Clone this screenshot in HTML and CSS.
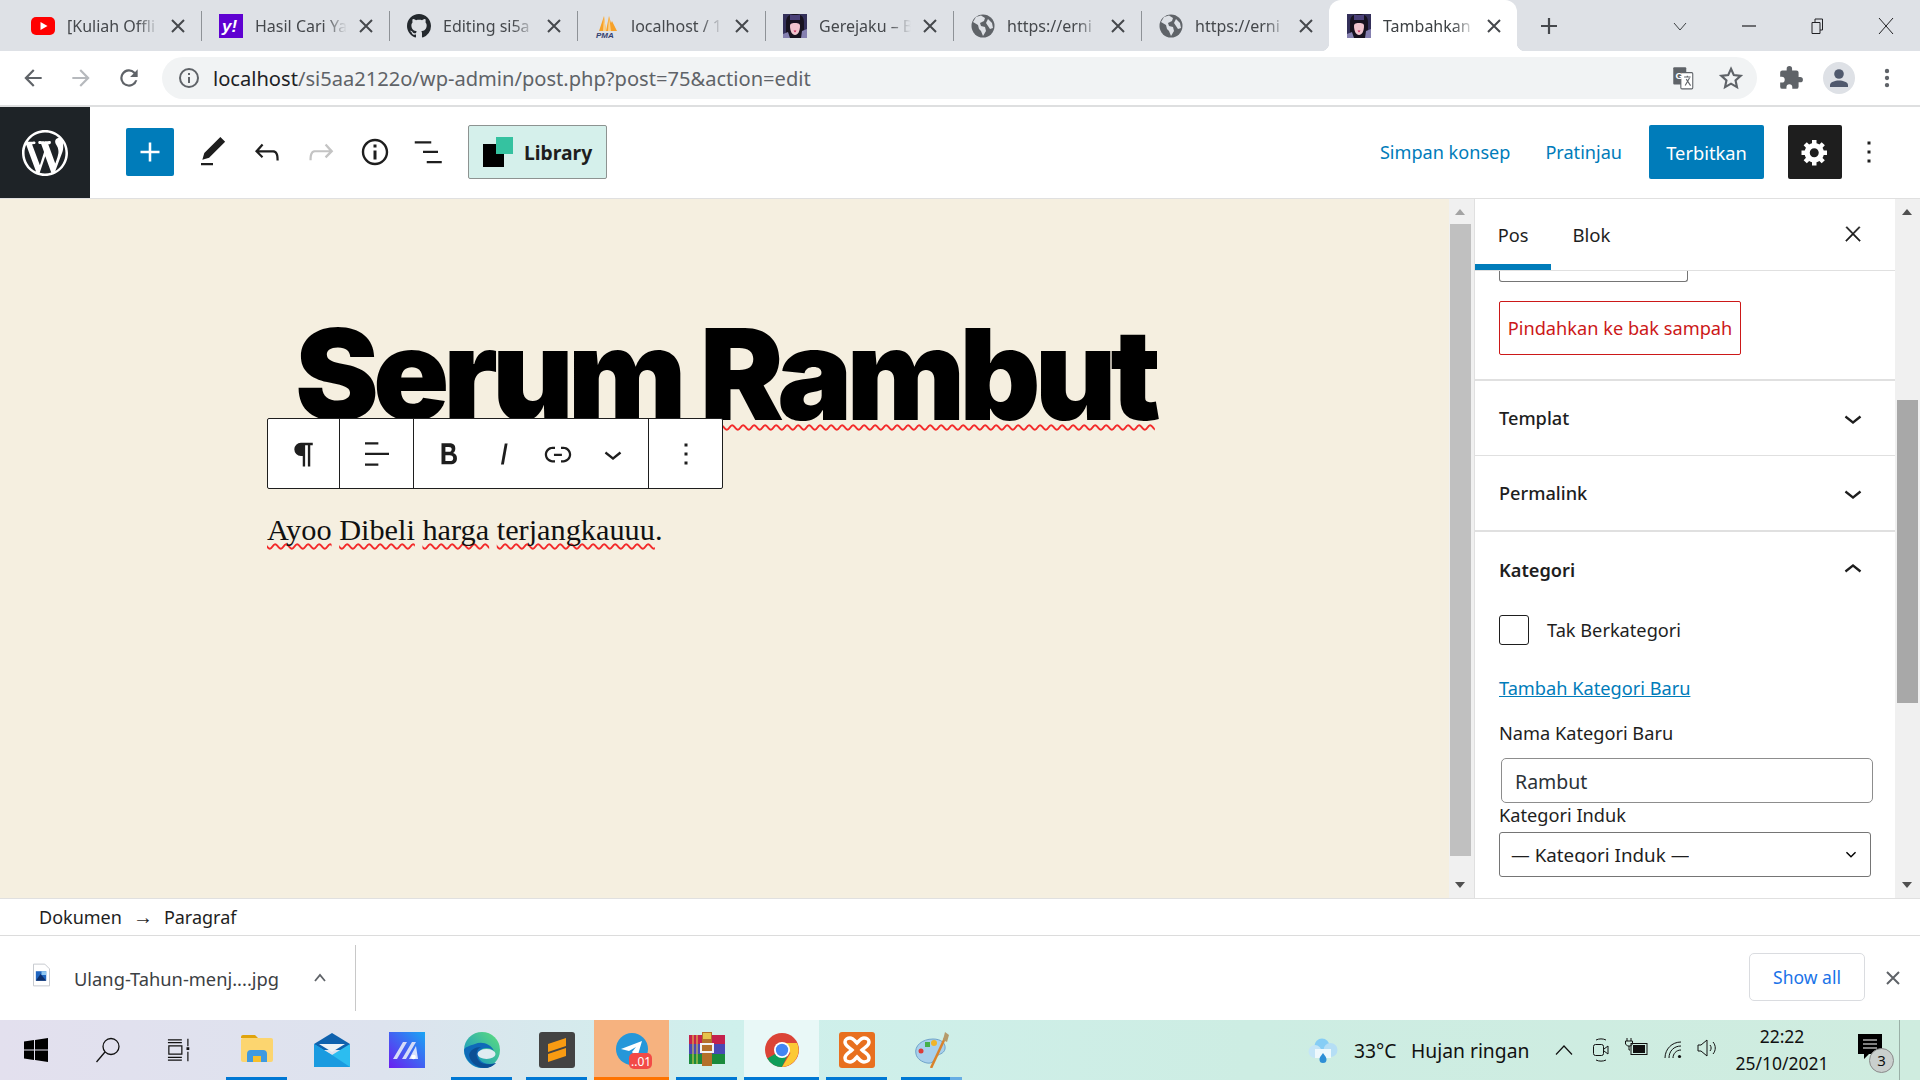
FILE: index.html
```html
<!DOCTYPE html>
<html lang="id">
  <head>
    <meta charset="UTF-8" />
    <meta name="viewport" content="width=device-width, initial-scale=1.0" />
    <title>Tambahkan Pos</title>
    <link rel="stylesheet" href="styles.css">
  </head>
  <body>
    <!-- Shared icons -->
    <svg class="defs" aria-hidden="true">
      <symbol id="i-x" viewBox="0 0 24 24"><path d="M13 11.8l6.1-6.3-1-1-6.1 6.2-6.1-6.2-1 1 6.1 6.3-6.5 6.7 1 1 6.5-6.6 6.5 6.6 1-1z"/></symbol>
      <symbol id="i-tabx" viewBox="0 0 18 18"><path d="M3 3l12 12M15 3L3 15" stroke="#45484c" stroke-width="2" fill="none"/></symbol>
      <symbol id="i-down" viewBox="0 0 24 24"><path d="M17.5 11.6L12 16l-5.5-4.4.9-1.2L12 14l4.5-3.6 1 1.2z"/></symbol>
      <symbol id="i-more" viewBox="0 0 24 24"><path d="M13 19h-2v-2h2v2zm0-6h-2v-2h2v2zm0-6h-2V5h2v2z"/></symbol>
      <symbol id="i-globe" viewBox="0 0 24 24"><circle cx="12" cy="12" r="11.5" fill="#5f6368"/><path d="M10 1.500l4 2.500-1 3-4 2 1 3 4 1 1 4-3 5-2-5-2-2-1-4-5-3 3-5zM17 5l4 4 1 5-3 1-2-3-2-3z" fill="#dee1e6"/></symbol>
      <symbol id="i-face" viewBox="0 0 24 24"><rect width="24" height="24" fill="#34305a"/><path d="M3 24V8c0-6 4-8 9-8s9 2 9 8v16z" fill="#17121f"/><path d="M7 12c0-2 1-3 5-3s5 1 5 3c0 5-2 9-5 9s-5-4-5-9z" fill="#f0c4cd"/><path d="M10.500 16.500h3l-1.500 2z" fill="#c8245a"/><rect x="7" y="1" width="10" height="5" fill="#4a4078"/><path d="M0 20l5-2 2 6H0zM24 15l-5 2-1 7h6z" fill="#8580b0"/></symbol>
    </svg>

    <!-- Browser tab strip -->
    <header class="tabstrip">
      <div class="tab">
        <svg class="favicon" viewBox="0 0 24 24"><rect y="3" width="24" height="18" rx="5" fill="#f00"/><path d="M9.500 8l7 4-7 4z" fill="#fff"/></svg>
        <span class="tab-title">[Kuliah Offli</span>
        <svg class="tab-close"><use href="#i-tabx"/></svg>
      </div>
      <div class="tab tab-sep">
        <svg class="favicon" viewBox="0 0 24 24"><rect width="24" height="24" fill="#5f01d1"/><text x="3" y="18" class="yahoo-mark">y!</text></svg>
        <span class="tab-title">Hasil Cari Ya</span>
        <svg class="tab-close"><use href="#i-tabx"/></svg>
      </div>
      <div class="tab tab-sep">
        <svg class="favicon" viewBox="0 0 16 16"><path fill="#24292e" d="M8 0C3.580 0 0 3.580 0 8c0 3.540 2.290 6.530 5.470 7.590.4.070.55-.17.55-.38 0-.19-.01-.82-.01-1.490-2.010.37-2.530-.49-2.690-.94-.09-.23-.48-.94-.82-1.130-.28-.15-.68-.52-.01-.53.63-.01 1.080.58 1.230.82.72 1.210 1.870.87 2.330.66.070-.52.28-.87.51-1.070-1.780-.2-3.640-.89-3.640-3.950 0-.87.31-1.590.82-2.150-.08-.2-.36-1.020.08-2.120 0 0 .67-.21 2.200.82.64-.18 1.320-.27 2-.27.68 0 1.360.09 2 .27 1.530-1.040 2.200-.82 2.200-.82.44 1.100.16 1.920.08 2.120.51.56.82 1.270.82 2.150 0 3.070-1.870 3.750-3.650 3.950.29.25.54.73.54 1.480 0 1.070-.01 1.930-.01 2.200 0 .21.15.46.55.38A8.013 8.013 0 0016 8c0-4.420-3.580-8-8-8z"/></svg>
        <span class="tab-title">Editing si5a</span>
        <svg class="tab-close"><use href="#i-tabx"/></svg>
      </div>
      <div class="tab tab-sep">
        <svg class="favicon" viewBox="0 0 24 24"><path d="M4 17L9 2l2 15zM11 17l3-15 2 7 1-2 5 10z" fill="#f7a128"/><path d="M9 2l2 15H8zM14 2l2 15h-3z" fill="#fbd08a"/><text x="1" y="23.500" class="pma-mark">PMA</text></svg>
        <span class="tab-title">localhost / 1</span>
        <svg class="tab-close"><use href="#i-tabx"/></svg>
      </div>
      <div class="tab tab-sep">
        <svg class="favicon"><use href="#i-face"/></svg>
        <span class="tab-title">Gerejaku – B</span>
        <svg class="tab-close"><use href="#i-tabx"/></svg>
      </div>
      <div class="tab tab-sep">
        <svg class="favicon"><use href="#i-globe"/></svg>
        <span class="tab-title">https://erni</span>
        <svg class="tab-close"><use href="#i-tabx"/></svg>
      </div>
      <div class="tab tab-sep">
        <svg class="favicon"><use href="#i-globe"/></svg>
        <span class="tab-title">https://erni</span>
        <svg class="tab-close"><use href="#i-tabx"/></svg>
      </div>
      <div class="tab tab-active">
        <svg class="favicon"><use href="#i-face"/></svg>
        <span class="tab-title">Tambahkan</span>
        <svg class="tab-close"><use href="#i-tabx"/></svg>
      </div>
      <svg class="new-tab" viewBox="0 0 20 20"><path d="M10 2v16M2 10h16" stroke="#45484c" stroke-width="2.200"/></svg>
      <div class="window-controls">
        <svg viewBox="0 0 16 16"><path d="M2 5l6 7 6-7" stroke="#3c4043" fill="none"/></svg>
        <svg viewBox="0 0 16 16"><path d="M1 8h14" stroke="#202124" stroke-width="1.200"/></svg>
        <svg viewBox="0 0 16 16"><path d="M3 4.500h8v11H3zM6 4.500V1h7.500v11H11" stroke="#202124" fill="none"/></svg>
        <svg viewBox="0 0 16 16"><path d="M1 0l14 16M15 0L1 16" stroke="#202124" fill="none"/></svg>
      </div>
    </header>

    <!-- Browser address bar -->
    <nav class="toolbar">
      <svg class="tool" viewBox="0 0 24 24"><path d="M20 11H7.800l5.600-5.600L12 4l-8 8 8 8 1.400-1.400L7.800 13H20z" fill="#5f6368"/></svg>
      <svg class="tool" viewBox="0 0 24 24"><path d="M4 11h12.200l-5.600-5.600L12 4l8 8-8 8-1.400-1.400 5.600-5.600H4z" fill="#b6b9bd"/></svg>
      <svg class="tool" viewBox="0 0 24 24"><path d="M17.650 6.350A8 8 0 1 0 19.730 14h-2.080A6 6 0 1 1 12 6c1.660 0 3.140.69 4.220 1.780L13 11h7V4z" fill="#5f6368"/></svg>
      <div class="omnibox">
        <svg class="omni-info" viewBox="0 0 24 24"><path fill="#5f6368" d="M12 2a10 10 0 1 0 0 20 10 10 0 0 0 0-20zm0 18a8 8 0 1 1 0-16 8 8 0 0 1 0 16zm-1-5h2v2h-2zm0-8h2v6h-2z" transform="rotate(180 12 12)"/></svg>
        <span class="url"><b>localhost</b>/si5aa2122o/wp-admin/post.php?post=75&amp;action=edit</span>
        <svg class="tool translate" viewBox="0 0 24 24"><rect x="3" y="2" width="12" height="16" rx="1" fill="#5f6368"/><rect x="10" y="7" width="11" height="15" rx="1" fill="#fff" stroke="#5f6368"/><text x="5" y="13" class="g-mark">G</text><path d="M13 11h6M16 10v1M14 19l4-7M15 13l4 6" stroke="#5f6368" fill="none"/></svg>
        <svg class="tool" viewBox="0 0 24 24"><path d="M12 3.500l2.600 5.800 6.300.7-4.700 4.200 1.300 6.200-5.500-3.200-5.500 3.200 1.300-6.200L3.100 10l6.300-.7z" fill="none" stroke="#5f6368" stroke-width="2"/></svg>
      </div>
      <svg class="tool tool-gap" viewBox="0 0 24 24"><path fill="#5f6368" d="M20.500 11H19V7a2 2 0 0 0-2-2h-4V3.500a2.500 2.500 0 0 0-5 0V5H4a2 2 0 0 0-2 2v3.800h1.500a2.700 2.700 0 0 1 0 5.400H2V20a2 2 0 0 0 2 2h3.800v-1.500a2.700 2.700 0 0 1 5.400 0V22H17a2 2 0 0 0 2-2v-4h1.500a2.500 2.500 0 0 0 0-5z"/></svg>
      <svg class="tool avatar" viewBox="0 0 32 32"><circle cx="16" cy="16" r="16" fill="#dee1e6"/><circle cx="16" cy="12" r="4.800" fill="#50596d"/><path d="M7 25v-2c0-3 5-4.500 9-4.500s9 1.500 9 4.500v2z" fill="#50596d"/></svg>
      <svg class="tool" viewBox="0 0 24 24"><circle cx="12" cy="5.500" r="2" fill="#5f6368"/><circle cx="12" cy="12" r="2" fill="#5f6368"/><circle cx="12" cy="18.500" r="2" fill="#5f6368"/></svg>
    </nav>

    <!-- WordPress editor header -->
    <div class="wp-header">
      <div class="wp-logo">
        <svg viewBox="0 0 20 20"><path fill="#fff" d="M20 10c0-5.510-4.490-10-10-10C4.480 0 0 4.490 0 10c0 5.520 4.480 10 10 10 5.510 0 10-4.480 10-10zM7.780 15.370L4.370 6.220c.55-.02 1.170-.08 1.170-.08.5-.06.44-1.130-.06-1.110 0 0-1.450.11-2.370.11-.18 0-.37 0-.58-.01C4.120 2.690 6.870 1.110 10 1.110c2.330 0 4.450.87 6.050 2.340-.68-.11-1.650.39-1.650 1.580 0 .74.45 1.360.9 2.100.35.61.55 1.360.55 2.460 0 1.490-1.400 5-1.400 5l-3.030-8.370c.54-.02.82-.17.82-.17.5-.05.44-1.250-.06-1.220 0 0-1.440.12-2.380.12-.87 0-2.330-.12-2.330-.12-.5-.03-.56 1.200-.06 1.220l.92.08 1.260 3.410zM17.410 10c.24-.64.74-1.870.43-4.250.7 1.290 1.050 2.710 1.050 4.250 0 3.290-1.730 6.240-4.400 7.780.97-2.590 1.940-5.200 2.920-7.780zM6.100 18.090C3.120 16.650 1.110 13.530 1.110 10c0-1.300.23-2.480.72-3.590C3.250 10.300 4.670 14.200 6.100 18.090zm4.030-6.630l2.580 6.980c-.86.29-1.760.45-2.710.45-.79 0-1.570-.11-2.290-.33.81-2.380 1.620-4.740 2.420-7.100z"/></svg>
      </div>
      <button class="wp-add">
        <svg viewBox="0 0 24 24"><path fill="#fff" d="M18 11.200h-5.200V6h-1.600v5.200H6v1.600h5.200V18h1.600v-5.200H18z"/></svg>
      </button>
      <div class="wp-tools">
        <span class="wp-tool"><svg viewBox="0 0 24 24"><path d="M20.100 5.100L16.900 2 6.200 12.700l-1.300 4.400 4.500-1.300L20.100 5.100zM4 20.800h8v-1.500H4v1.500z"/></svg></span>
        <span class="wp-tool"><svg viewBox="0 0 24 24"><path d="M18.300 11.700c-.6-.6-1.400-.9-2.300-.9H6.700l2.900-3.300-1.100-1-4.500 5L8.500 16l1-1-2.700-2.700H16c.5 0 .9.2 1.300.5 1 1 1 3.400 1 4.500v.3h1.500v-.2c0-1.500 0-4.300-1.500-5.700z"/></svg></span>
        <span class="wp-tool is-off"><svg viewBox="0 0 24 24"><path d="M15.600 6.500l-1.100 1 2.900 3.300H8c-.9 0-1.700.3-2.300.9-1.400 1.500-1.400 4.200-1.400 5.600v.2h1.500v-.3c0-1.100 0-3.500 1-4.500.3-.3.7-.5 1.300-.5h9.200L14.500 15l1.100 1.100 4.600-4.600-4.600-5z"/></svg></span>
        <span class="wp-tool"><svg viewBox="0 0 24 24"><path d="M12 3.200c-4.800 0-8.800 3.900-8.800 8.800 0 4.800 3.900 8.800 8.800 8.800 4.800 0 8.800-3.900 8.800-8.800 0-4.800-4-8.800-8.800-8.800zm0 16c-4 0-7.200-3.300-7.200-7.200C4.800 8 8 4.800 12 4.800s7.200 3.300 7.200 7.200c0 4-3.200 7.200-7.200 7.200zM11 17h2v-6h-2v6zm0-8h2V7h-2v2z"/></svg></span>
        <span class="wp-tool"><svg viewBox="0 0 24 24"><path d="M2.500 4.800h11v1.500h-11zM8 11.200h10v1.500H8zM10.500 18h10v1.500h-10z"/></svg></span>
      </div>
      <button class="library">
        <svg viewBox="0 0 30 30"><rect y="7" width="21" height="23"/><rect x="13" width="17" height="17" fill="#35c2a0"/></svg>
        <span>Library</span>
      </button>
      <div class="wp-actions">
        <a class="wp-link">Simpan konsep</a>
        <a class="wp-link">Pratinjau</a>
        <button class="publish">Terbitkan</button>
        <button class="gear">
          <svg viewBox="0 0 20 20"><path fill="#fff" d="M18 12h-2.180c-.17.7-.44 1.350-.81 1.930l1.540 1.540-2.100 2.100-1.540-1.540c-.58.36-1.230.63-1.910.79V19H8v-2.180c-.68-.16-1.330-.43-1.910-.79l-1.540 1.540-2.120-2.120 1.540-1.540c-.36-.58-.63-1.230-.79-1.910H1V9.030h2.170c.16-.7.44-1.350.8-1.940L2.430 5.550l2.100-2.100 1.540 1.540c.58-.37 1.240-.64 1.930-.81V2h3v2.180c.68.16 1.330.43 1.910.79l1.540-1.540 2.120 2.120-1.540 1.540c.36.59.64 1.240.8 1.940H18V12zm-8.500 1.500c1.660 0 3-1.340 3-3s-1.340-3-3-3-3 1.340-3 3 1.340 3 3 3z"/></svg>
        </button>
        <span class="wp-more"><svg><use href="#i-more"/></svg></span>
      </div>
    </div>

    <!-- Editor canvas, sidebar and scrollbars -->
    <main class="workspace">
      <section class="canvas">
        <h1 class="post-title">Serum Rambut</h1>
        <p class="post-text"><span class="typo">Ayoo</span> <span class="typo">Dibeli</span> <span class="typo">harga</span> <span class="typo">terjangkauuu</span>.</p>

        <!-- Floating block toolbar -->
        <div class="block-bar">
          <div class="bar-group group-a">
            <svg class="para-icon" viewBox="0 0 24 24"><path d="M9.500 3H19v2h-2v17h-1.900V5h-2.200v17H11v-8.500H9.500a5.250 5.250 0 0 1 0-10.500z"/></svg>
          </div>
          <div class="bar-group group-b">
            <svg viewBox="0 0 24 24"><path d="M4 19.800h8.900v-1.500H4v1.500zm8.900-15.600H4v1.500h8.900V4.200zm-8.900 7v1.500h16v-1.500H4z"/></svg>
          </div>
          <div class="bar-group group-c">
            <span class="bar-icon"><svg viewBox="0 0 24 24"><path d="M14.700 11.300c1-.6 1.500-1.600 1.500-3 0-2.300-1.300-3.400-4-3.400H7v14h5.800c1.400 0 2.500-.3 3.300-1 .8-.7 1.200-1.700 1.200-2.900.1-1.900-.8-3.100-2.600-3.700zm-5.100-4h2.300c.6 0 1.100.1 1.400.4.3.3.5.7.5 1.200s-.2 1-.5 1.200c-.3.3-.8.4-1.400.4H9.600V7.300zm4.600 9c-.4.3-1 .4-1.700.4H9.600v-3.900h2.900c.7 0 1.300.2 1.700.5.4.3.6.8.6 1.500s-.2 1.200-.6 1.500z"/></svg></span>
            <span class="bar-icon"><svg viewBox="0 0 24 24"><path d="M12.500 5L10 19h1.900l2.500-14z"/></svg></span>
            <span class="bar-icon"><svg viewBox="0 0 24 24"><path d="M15.600 7.200H14v1.500h1.600c2 0 3.700 1.700 3.700 3.700s-1.700 3.700-3.700 3.700H14v1.500h1.600c2.800 0 5.200-2.300 5.200-5.200 0-2.900-2.300-5.200-5.200-5.200zM4.700 12.400c0-2 1.700-3.700 3.700-3.700H10V7.200H8.400c-2.900 0-5.200 2.300-5.200 5.200 0 2.900 2.300 5.200 5.200 5.200H10v-1.500H8.400c-2 0-3.700-1.700-3.700-3.700zm4.600.9h5.300v-1.500H9.300v1.500z"/></svg></span>
            <span class="bar-icon"><svg><use href="#i-down"/></svg></span>
          </div>
          <div class="bar-group group-d">
            <svg><use href="#i-more"/></svg>
          </div>
        </div>
      </section>

      <div class="scroll scroll-inner">
        <span class="arrow-up"></span>
        <span class="thumb thumb-inner"></span>
        <span class="scroll-fill"></span>
        <span class="arrow-down"></span>
      </div>

      <aside class="sidebar">
        <div class="side-tabs">
          <span class="side-tab side-tab-on">Pos</span>
          <span class="side-tab">Blok</span>
          <svg class="side-close"><use href="#i-x"/></svg>
        </div>

        <div class="panel-top">
          <div class="cut-input"></div>
          <button class="trash">Pindahkan ke bak sampah</button>
        </div>

        <div class="panel-row row-templat">
          <span>Templat</span>
          <svg><use href="#i-down"/></svg>
        </div>
        <div class="panel-row row-permalink">
          <span>Permalink</span>
          <svg><use href="#i-down"/></svg>
        </div>

        <div class="panel-cat">
          <div class="panel-row row-kategori">
            <span>Kategori</span>
            <svg class="flip"><use href="#i-down"/></svg>
          </div>
          <label class="check-row"><span class="check"></span>Tak Berkategori</label>
          <a class="add-cat">Tambah Kategori Baru</a>
          <div class="cat-label label-name">Nama Kategori Baru</div>
          <div class="cat-input">Rambut</div>
          <div class="cat-label">Kategori Induk</div>
          <div class="cat-select">
            <span class="select-text">— Kategori Induk —</span>
            <svg viewBox="0 0 24 24"><path d="M17.500 9.600L12 15 6.500 9.600l1.100-1.100L12 12.800l4.400-4.300z"/></svg>
          </div>
        </div>
      </aside>

      <div class="scroll scroll-outer">
        <span class="arrow-up dark"></span>
        <span class="scroll-gap"></span>
        <span class="thumb thumb-outer"></span>
        <span class="scroll-fill"></span>
        <span class="arrow-down"></span>
      </div>
    </main>

    <!-- Block breadcrumb -->
    <div class="crumbs">
      <span>Dokumen</span>
      <span class="crumb-arrow">→</span>
      <span>Paragraf</span>
    </div>

    <!-- Downloads shelf -->
    <div class="shelf">
      <div class="download">
        <svg class="file-icon" viewBox="0 0 18 24"><path d="M.5.500h12l5 5v18H.5z" fill="#fff" stroke="#c4c7cc"/><rect x="3" y="8" width="11" height="10" fill="#1f65c0"/><path d="M3 18l5-7 6 7z" fill="#0d2f6b"/><rect x="9" y="8" width="5" height="4" fill="#8fc7f2"/></svg>
        <span class="file-name">Ulang-Tahun-menj....jpg</span>
        <svg class="file-up" viewBox="0 0 16 16"><path d="M3 11l5-6 5 6" fill="none" stroke="#5f6368" stroke-width="1.800"/></svg>
      </div>
      <button class="show-all">Show all</button>
      <svg class="shelf-close" viewBox="0 0 16 16"><path d="M2 2l12 12M14 2L2 14" stroke="#5f6368" stroke-width="2"/></svg>
    </div>

    <!-- Windows taskbar -->
    <footer class="taskbar">
      <div class="task-sys">
        <svg viewBox="0 0 24 24"><path d="M0 3.400l10-1.400v9.500H0zM11 1.900L24 0v11.500H11zM0 12.500h10V22L0 20.600zM11 12.500h13V24l-13-1.900z"/></svg>
      </div>
      <div class="task-sys">
        <svg viewBox="0 0 26 26" fill="none" stroke="#111" stroke-width="1.300"><circle cx="16" cy="9.500" r="8"/><path d="M10 15L1.500 25"/></svg>
      </div>
      <div class="task-sys">
        <svg viewBox="0 0 28 24" fill="none" stroke="#111" stroke-width="1.300"><path d="M1 1h15M1 4h15M2 7.500h14v9H2zM1 20h15M1 23h15M22.500 0v8M22.500 14v10"/><rect x="21" y="9" width="3" height="3" fill="#111" stroke="none"/></svg>
      </div>
      <div class="task-app is-open">
        <svg viewBox="0 0 36 36"><path d="M2 5a2 2 0 0 1 2-2h12l3 3H2z" fill="#e0a30c"/><rect x="2" y="6" width="32" height="24" rx="2" fill="#fcd56f"/><path d="M8 30v-8a4 4 0 0 1 4-4h12a4 4 0 0 1 4 4v8h-6v-6h-8v6z" fill="#3f9ae0"/><rect x="14" y="24" width="8" height="6" fill="#f6bf2c"/></svg>
      </div>
      <div class="task-app">
        <svg viewBox="0 0 36 36"><path d="M0 12L18 1l18 11v6H0z" fill="#0f62ae"/><path d="M5 12h26l-13 8z" fill="#eef3f6"/><path d="M0 12l18 11 18-11v23H0z" fill="#2cbdf0"/><path d="M0 35V12l18 11 18 12z" fill="#1a9be0"/></svg>
      </div>
      <div class="task-app">
        <svg viewBox="0 0 36 36"><defs><linearGradient id="vs-bg" x1="0" y1="1" x2="1" y2="0"><stop offset="0" stop-color="#6a1df0"/><stop offset="1" stop-color="#1aa6f4"/></linearGradient></defs><rect width="36" height="36" fill="url(#vs-bg)"/><path d="M4 27L14 10h4L8 27zM13 27l10-17h4l-10 17z" fill="#d6dcf8"/><path d="M20 27l7-13 2 13z" fill="#fff" opacity=".8"/><circle cx="24.500" cy="25" r="2.300" fill="#fff"/></svg>
      </div>
      <div class="task-app is-open">
        <svg viewBox="0 0 36 36"><defs><linearGradient id="edge-top" x1="0" y1="1" x2="1" y2="0"><stop offset="0" stop-color="#0f8cd0"/><stop offset="1" stop-color="#5fe07a"/></linearGradient></defs><circle cx="18" cy="18" r="18" fill="url(#edge-top)"/><path d="M0 18C1 29 10 36 20 36c5 0 9-2 12-5-6 2-13 1-16-3-3-4-2-9 2-11 4-2 9-1 12 2-3-7-12-10-19-7C5 14 1 15 0 18z" fill="#0f6ab8"/><path d="M15 29c-4-5-3-12 2-14-6 0-11 3-12 8 1 6 6 12 15 13 5 0 9-2 12-5-6 2-14 2-17-2z" fill="#0c4f94"/><ellipse cx="22.500" cy="22" rx="9" ry="5" fill="#e0ecf2"/></svg>
      </div>
      <div class="task-app is-open">
        <svg viewBox="0 0 36 36"><rect width="36" height="36" rx="3" fill="#434343"/><path d="M27 6v8L9 20v-8zM27 16v8L9 30v-8z" fill="#f89b12"/></svg>
      </div>
      <div class="task-app task-hot is-hot">
        <svg viewBox="0 0 36 36" class="spill"><circle cx="18" cy="17" r="16" fill="#2697d9"/><path d="M7 17l21-8-5 17-5-6 4-5-7 4z" fill="#fff"/><rect x="15" y="21" width="23" height="16" rx="5" fill="#f24b47"/><text x="17" y="33.500" class="badge-text">..01</text></svg>
      </div>
      <div class="task-app is-open">
        <svg viewBox="0 0 36 36"><rect y="3" width="36" height="9" fill="#c4224d"/><rect y="12" width="36" height="10" fill="#4a49b4"/><rect y="22" width="36" height="10" fill="#1a8a3c"/><path d="M4 3v29M8 3v29" stroke="#e8d44a" stroke-width="1"/><rect x="13" y="0" width="10" height="34" fill="#b4702a"/><rect x="14" y="1" width="8" height="6" fill="#e6c34a"/><rect x="12" y="12" width="12" height="8" fill="none" stroke="#f2f2f2" stroke-width="2"/></svg>
      </div>
      <div class="task-app task-lit is-open">
        <svg viewBox="0 0 36 36"><circle cx="18" cy="18" r="17" fill="#db4437"/><path d="M18 18L3.300 26.500A17 17 0 0 0 18 35l8-17z" fill="#0f9d58"/><path d="M18 11h15.100A17 17 0 0 1 18 35l8.500-14z" fill="#fcc934"/><circle cx="18" cy="18" r="8" fill="#fff"/><circle cx="18" cy="18" r="6.200" fill="#4285f4"/></svg>
      </div>
      <div class="task-app is-open">
        <svg viewBox="0 0 36 36"><rect width="36" height="36" rx="3" fill="#e8701f"/><path d="M6 10c0-3 3-4 5-4 3 0 5 3 7 5 2-2 4-5 7-5 2 0 5 1 5 4 0 4-4 5-7 8 3 3 7 4 7 8 0 3-3 4-5 4-3 0-5-3-7-5-2 2-4 5-7 5-2 0-5-1-5-4 0-4 4-5 7-8-3-3-7-4-7-8z" fill="none" stroke="#fff" stroke-width="3.500"/></svg>
      </div>
      <div class="task-app is-split">
        <svg viewBox="0 0 36 36"><path d="M2 22C0 14 8 7 19 7c8 0 13 4 12 10-1 5-7 5-9 8s-3 7-9 6C8 30 3 27 2 22z" fill="#a8d0ec" stroke="#6fa3c9"/><circle cx="7" cy="19" r="2.500" fill="#dc3a3a"/><rect x="11" y="10" width="5" height="5" fill="#46b04a"/><circle cx="20" cy="11" r="3" fill="#f0b429"/><path d="M17 36L31 6" stroke="#d9822b" stroke-width="2.500"/><path d="M29 8l2-8 4 3-2 7z" fill="#b59a6a"/></svg>
      </div>

      <div class="tray">
        <svg class="tray-cloud" viewBox="0 0 30 30"><circle cx="14" cy="11" r="7.500" fill="#86cdf5"/><circle cx="22.500" cy="15" r="7" fill="#b5def5"/><circle cx="7" cy="16.500" r="6.500" fill="#c4e5f7"/><rect x="7" y="14" width="16" height="9" fill="#eef8fc"/><path d="M15 18c2.500 3.500 3.500 4.500 3.500 6.500a3.500 3.500 0 0 1-7 0c0-2 1-3 3.500-6.500z" fill="#2e8fd6"/></svg>
        <span class="tray-temp">33°C</span>
        <span class="tray-weather">Hujan ringan</span>
        <svg class="tray-up" viewBox="0 0 18 10"><path d="M1 9.500L9 1l8 8.500" fill="none" stroke="#111" stroke-width="1.200"/></svg>
        <svg class="tray-meet" viewBox="0 0 16 24" fill="none" stroke="#111"><path d="M3 2c3-1.500 7-1.500 10 0M3 22c3 1.500 7 1.500 10 0"/><rect x=".5" y="6.500" width="10" height="11" rx="2"/><path d="M11 11l4-3v8l-4-3"/></svg>
        <svg class="tray-battery" viewBox="0 0 24 18" fill="none" stroke="#111"><path d="M3 0v3M7 0v3M1.500 3h7v3l-2 2h-3l-2-2zM5 8v4h1"/><rect x="7" y="5.500" width="16" height="11"/><rect x="9" y="7" width="12" height="8" fill="#111" stroke="none"/></svg>
        <svg class="tray-wifi" viewBox="0 0 18 18" fill="none" stroke="#111"><path d="M1 17C1 8 8 1 17 1M5 17c0-7 5-12 12-12M9 17c0-4 3-8 8-8"/><circle cx="15.500" cy="15.500" r="1.600" fill="#111" stroke="none"/></svg>
        <svg class="tray-sound" viewBox="0 0 22 18" fill="none" stroke="#111"><path d="M1 6h3l6-5v16l-6-5H1zM13 6c1.500 2 1.500 4 0 6M16 3c3 3.500 3 8.500 0 12"/></svg>
        <div class="tray-clock">
          <span>22:22</span>
          <span>25/10/2021</span>
        </div>
        <div class="tray-note">
          <svg viewBox="0 0 24 26"><path d="M0 0h24v20H11l-5 5v-5H0z" fill="#000"/><path d="M5 6h14M5 10h14M5 14h14" stroke="#fff" stroke-width="1.200"/></svg>
          <span class="note-count">3</span>
        </div>
        <span class="tray-peek"></span>
      </div>
    </footer>
  </body>
</html>
```

FILE: styles.css
```css
/* Page frame */
* {
  box-sizing: border-box;
}

body {
  margin: 0;
  width: 1920px;
  height: 1080px;
  overflow: hidden;
  display: flex;
  flex-direction: column;
  font-family: "Noto Sans", sans-serif;
  color: #1e1e1e;
  background: #fff;
}

button {
  font-family: inherit;
  padding: 0;
  cursor: pointer;
}

svg {
  display: block;
  flex: none;
}

.defs {
  display: none;
}

/* Browser tab strip */
.tabstrip {
  height: 51px;
  flex: none;
  display: flex;
  align-items: stretch;
  padding-left: 13px;
  background: #dee1e6;
}

.tab {
  position: relative;
  width: 188px;
  flex: none;
  display: flex;
  align-items: center;
  padding-left: 18px;
  font-size: 16px;
  color: #45484c;
}

/* Thin line between two inactive tabs */
.tab-sep::before {
  content: "";
  position: absolute;
  left: 0;
  top: 11px;
  width: 1px;
  height: 30px;
  background: #8e9297;
}

.tab-active {
  background: #fff;
  border-radius: 12px 12px 0 0;
  color: #3c4043;
}

.tab-active::before,
.tab-active::after {
  content: "";
  position: absolute;
  bottom: 0;
  width: 8px;
  height: 8px;
}

.tab-active::before {
  left: -8px;
  background: radial-gradient(circle at 0 0, transparent 8px, #fff 8.5px);
}

.tab-active::after {
  right: -8px;
  background: radial-gradient(circle at 100% 0, transparent 8px, #fff 8.5px);
}

.favicon {
  width: 24px;
  height: 24px;
  margin-right: 12px;
}

.tab-title {
  width: 92px;
  white-space: nowrap;
  -webkit-mask-image: linear-gradient(90deg, #000 76%, transparent 100%);
  mask-image: linear-gradient(90deg, #000 76%, transparent 100%);
}

.tab-close {
  width: 18px;
  height: 18px;
  margin-left: 10px;
}

.yahoo-mark {
  font: italic 700 17px "Liberation Sans", sans-serif;
  fill: #fff;
}

.pma-mark {
  font: italic 700 8px "Liberation Sans", sans-serif;
  fill: #33406e;
}

.g-mark {
  font: 700 9px "Liberation Sans", sans-serif;
  fill: #fff;
}

.new-tab {
  width: 20px;
  height: 20px;
  align-self: center;
  margin-left: 22px;
}

.window-controls {
  margin-left: auto;
  display: flex;
  align-items: center;
  padding-right: 26px;
  gap: 52.700px;
}

.window-controls svg {
  width: 16px;
  height: 16px;
}

/* Browser address bar */
.toolbar {
  height: 56px;
  flex: none;
  display: flex;
  align-items: center;
  padding: 0 9px 0 9px;
  background: #fff;
  border-bottom: 2px solid #dedfe0;
}

.tool {
  width: 48px;
  height: 26px;
  flex: none;
}

.omnibox {
  width: 1595px;
  height: 42px;
  margin: 0 10px 0 9px;
  padding-left: 15px;
  padding-right: 2px;
  display: flex;
  align-items: center;
  border-radius: 21px;
  background: #f1f3f4;
}

.omni-info {
  width: 24px;
  height: 24px;
  margin-right: 12px;
}

.url {
  font-size: 20.100px;
  color: #5f6368;
  white-space: nowrap;
  flex: 1;
}

.url b {
  font-weight: 400;
  color: #202124;
}

.avatar {
  height: 32px;
}

/* WordPress editor header */
.wp-header {
  height: 92px;
  flex: none;
  display: flex;
  align-items: center;
  padding-bottom: 1px;
  border-bottom: 1px solid #e0e0e0;
  background: #fff;
}

.wp-logo {
  width: 90px;
  height: 91px;
  margin-bottom: -1px;
  display: flex;
  align-items: center;
  justify-content: center;
  background: #1e2327;
}

.wp-logo svg {
  width: 46px;
  height: 46px;
}

.wp-add {
  width: 48px;
  height: 48px;
  margin-left: 36px;
  display: flex;
  align-items: center;
  justify-content: center;
  border: none;
  border-radius: 2px;
  background: #007cba;
}

.wp-add svg {
  width: 38px;
  height: 38px;
}

.wp-tools {
  display: flex;
  margin-left: 12px;
}

.wp-tool {
  width: 54px;
  display: flex;
  justify-content: center;
}

.wp-tool svg {
  width: 36px;
  height: 36px;
  fill: #1e1e1e;
}

.wp-tool.is-off svg {
  fill: #c4c4c4;
}

.library {
  width: 139px;
  height: 54px;
  margin-left: 12px;
  display: flex;
  align-items: center;
  padding-left: 14px;
  gap: 11px;
  border: 1px solid #8d9391;
  border-radius: 2px;
  background: #d5f0eb;
  font-size: 19.300px;
  font-weight: 700;
  color: #1e1e1e;
}

.library svg {
  width: 30px;
  height: 30px;
}

.wp-actions {
  margin-left: auto;
  display: flex;
  align-items: center;
  padding-right: 24px;
}

.wp-link {
  font-size: 18.100px;
  color: #007cba;
  margin-right: 35px;
}

.wp-link + .wp-link {
  margin-right: 27px;
}

.publish {
  width: 115px;
  height: 54px;
  border: none;
  border-radius: 2px;
  background: #007cba;
  color: #fff;
  font-size: 18.300px;
}

.gear {
  width: 54px;
  height: 54px;
  margin-left: 24px;
  display: flex;
  align-items: center;
  justify-content: center;
  border: none;
  border-radius: 2px;
  background: #1e1e1e;
}

.gear svg {
  width: 30px;
  height: 30px;
}

.wp-more {
  width: 54px;
  display: flex;
  justify-content: center;
}

.wp-more svg,
.bar-group svg,
.bar-icon svg {
  width: 36px;
  height: 36px;
  fill: #1e1e1e;
}

.bar-group .para-icon {
  width: 30px;
  height: 30px;
}

/* Editor canvas, sidebar and scrollbars */
.workspace {
  height: 699px;
  flex: none;
  display: flex;
}

.canvas {
  position: relative;
  width: 1449px;
  flex: none;
  overflow: hidden;
  background: #f5efe0;
  padding: 105px 0 0 295px;
}

.post-title {
  margin: 0;
  font-family: Inter, sans-serif;
  font-size: 126px;
  font-weight: 900;
  line-height: 140px;
  letter-spacing: -6px;
  color: #000;
  white-space: nowrap;
  text-decoration: underline wavy #f32a2a 1.500px;
  text-decoration-skip-ink: none;
  text-underline-offset: 4px;
}

.post-text {
  margin: 64px 0 0 -28px;
  font-family: "Liberation Serif", serif;
  font-size: 30.300px;
  line-height: 44px;
  color: #111;
}

.typo {
  text-decoration: underline wavy #f32a2a 1.500px;
  text-decoration-skip-ink: none;
  text-underline-offset: 3px;
}

/* Floating block toolbar */
.block-bar {
  position: absolute;
  left: 267px;
  top: 219px;
  width: 456px;
  height: 71px;
  display: flex;
  border: 1px solid #1e1e1e;
  border-radius: 2px;
  background: #fff;
}

.bar-group {
  display: flex;
  align-items: center;
  justify-content: center;
  border-right: 1px solid #1e1e1e;
}

.bar-group:last-child {
  border-right: none;
}

.group-a {
  width: 72px;
}

.group-b {
  width: 74px;
}

.group-c {
  width: 235px;
  padding-left: 8px;
  padding-right: 8px;
}

.group-d {
  flex: 1;
}

.bar-icon {
  width: 55px;
  display: flex;
  justify-content: center;
}

.scroll {
  flex: none;
  display: flex;
  flex-direction: column;
  align-items: center;
  background: #f0f0f0;
}

.scroll-inner {
  width: 26px;
  padding-right: 3px;
  border-right: 1px solid #e0e0e0;
}

.scroll-outer {
  width: 25px;
}

.scroll-fill {
  flex: 1;
}

.scroll-gap {
  height: 176px;
}

.thumb {
  width: 21px;
  flex: none;
}

.thumb-inner {
  height: 632px;
  background: #c0c0c0;
}

.thumb-outer {
  height: 303px;
  background: #a8a8a8;
}

/* Scrollbar arrows are plain CSS triangles */
.arrow-up,
.arrow-down {
  height: 25px;
  flex: none;
  position: relative;
  width: 11px;
}

.arrow-up::before,
.arrow-down::before {
  content: "";
  position: absolute;
  left: 0;
  border-left: 5.5px solid transparent;
  border-right: 5.5px solid transparent;
}

.arrow-up::before {
  top: 10px;
  border-bottom: 6px solid #a3a3a3;
}

.arrow-up.dark::before {
  border-bottom-color: #505050;
}

.arrow-down::before {
  top: 9px;
  border-top: 6px solid #505050;
}

.sidebar {
  width: 420px;
  flex: none;
  overflow: hidden;
  background: #fff;
  font-size: 18.200px;
  color: #1e1e1e;
}

.side-tabs {
  height: 72px;
  display: flex;
  border-bottom: 1px solid #e0e0e0;
}

.side-tab {
  width: 76px;
  height: 71px;
  padding-top: 23px;
  text-align: center;
  line-height: 26px;
}

.side-tab + .side-tab {
  width: 69px;
  margin-left: 6px;
  font-size: 18.600px;
}

.side-tab-on {
  border-bottom: 6px solid #007cba;
}

.side-close {
  width: 24px;
  height: 24px;
  margin: 23px 30px 0 auto;
  fill: #1e1e1e;
  stroke: #1e1e1e;
  stroke-width: .4px;
}

.panel-top {
  height: 110px;
  padding: 0 24px;
  border-bottom: 2px solid #e0e0e0;
}

.cut-input {
  width: 189px;
  height: 11px;
  border: 1px solid #757575;
  border-top: none;
  border-radius: 0 0 3px 3px;
}

.trash {
  display: block;
  width: 242px;
  height: 54px;
  margin-top: 19px;
  border: 1px solid #cc1818;
  border-radius: 2px;
  background: #fff;
  color: #cc1818;
  font-size: 18.200px;
}

.panel-row {
  display: flex;
  align-items: center;
  justify-content: space-between;
  padding: 0 24px;
  font-weight: 500;
}

.panel-row svg {
  width: 36px;
  height: 36px;
  fill: #1e1e1e;
}

.row-templat {
  height: 75px;
  border-bottom: 1px solid #e0e0e0;
}

.row-permalink {
  height: 76px;
  border-bottom: 2px solid #e0e0e0;
}

.row-kategori {
  height: 76px;
  padding: 0 24px 0 0;
  font-weight: 600;
}

.flip {
  transform: scaleY(-1);
}

.panel-cat {
  padding-left: 24px;
}

.check-row {
  display: flex;
  align-items: center;
  height: 30px;
  margin-top: 6px;
  padding-top: 1px;
}

.check {
  width: 30px;
  height: 30px;
  margin-right: 18px;
  border: 1px solid #1e1e1e;
  border-radius: 3px;
}

.add-cat {
  display: block;
  margin-top: 32px;
  line-height: 24px;
  color: #007cba;
  text-decoration: underline;
}

.cat-label {
  line-height: 24px;
}

.label-name {
  margin-top: 21px;
}

.cat-input {
  width: 372px;
  height: 45px;
  margin: 13px 0 0 2px;
  padding: 4px 13px 0;
  border: 1px solid #8d8d8d;
  border-radius: 5px;
  line-height: 38px;
  font-size: 19.500px;
  color: #2c3338;
}

.cat-select {
  width: 372px;
  height: 45px;
  margin-top: 5px;
  padding: 0 8px 0 11px;
  display: flex;
  align-items: center;
  justify-content: space-between;
  border: 1px solid #757575;
  border-radius: 3px;
}

.select-text {
  height: 20px;
  margin-top: -3px;
  line-height: 24px;
  overflow: hidden;
  font-size: 18.800px;
}

.cat-select svg {
  width: 22px;
  height: 22px;
}

/* Block breadcrumb */
.crumbs {
  height: 38px;
  flex: none;
  display: flex;
  align-items: center;
  padding-left: 39px;
  gap: 11px;
  border-top: 1px solid #e0e0e0;
  border-bottom: 1px solid #dcdcdc;
  font-size: 18px;
}

.crumb-arrow {
  font-size: 20px;
  line-height: 24px;
}

/* Downloads shelf */
.shelf {
  height: 84px;
  flex: none;
  display: flex;
  align-items: center;
  background: #fff;
}

.download {
  width: 356px;
  height: 66px;
  padding-left: 33px;
  display: flex;
  align-items: center;
  border-right: 1px solid #c8c8c8;
}

.file-icon {
  width: 17px;
  height: 24px;
  margin-top: -6px;
}

.file-name {
  width: 226px;
  margin-left: 24px;
  font-size: 18.300px;
  color: #3c4043;
  white-space: nowrap;
}

.file-up {
  width: 16px;
  height: 16px;
  margin-left: 12px;
}

.show-all {
  width: 116px;
  height: 48px;
  margin-left: auto;
  margin-top: -2px;
  border: 1px solid #dadce0;
  border-radius: 5px;
  background: #fff;
  color: #1a73e8;
  font-size: 17.500px;
}

.shelf-close {
  width: 16px;
  height: 16px;
  margin: 0 19px 0 20px;
}

/* Windows taskbar */
.taskbar {
  height: 60px;
  flex: none;
  display: flex;
  align-items: stretch;
  background: linear-gradient(90deg, #e3e0ee 0%, #dde3ee 20%, #cff0ec 38%, #cdede3 65%, #cfecdf 100%);
}

.task-sys {
  width: 72px;
  flex: none;
  display: flex;
  align-items: center;
  justify-content: center;
}

.task-sys svg {
  width: 24px;
  height: 24px;
}

.task-sys + .task-sys svg {
  width: 26px;
  height: 26px;
}

.task-app {
  width: 75px;
  flex: none;
  display: flex;
  align-items: center;
  justify-content: center;
}

.task-sys + .task-app {
  margin-left: 3px;
}

.task-app svg {
  width: 36px;
  height: 36px;
}

/* Bottom bars that mark a running program */
.is-open {
  background: linear-gradient(#0078d4, #0078d4) center bottom / 61px 3px no-repeat;
}

.is-hot {
  background: linear-gradient(#ff7300, #ff7300) center bottom / 100% 3px no-repeat, #f6b27f;
}

.task-lit {
  background: linear-gradient(#0078d4, #0078d4) center bottom / 100% 3px no-repeat, #e9f8f7;
}

.is-split {
  background: linear-gradient(90deg, #0078d4 49px, #67ade4 49px) center bottom / 61px 3px no-repeat;
}

.spill {
  overflow: visible;
}

.badge-text {
  font: 12px "Noto Sans", sans-serif;
  fill: #fff;
}

.tray {
  margin-left: auto;
  width: 612px;
  display: flex;
  align-items: center;
  font-size: 19.300px;
  color: #111;
}

.tray-cloud {
  width: 30px;
  height: 30px;
}

.tray-temp {
  width: 57px;
  margin-left: 16px;
  white-space: nowrap;
}

.tray-weather {
  width: 144px;
  white-space: nowrap;
}

.tray-up {
  width: 18px;
  height: 10px;
}

.tray-meet {
  width: 16px;
  height: 24px;
  margin-left: 20px;
}

.tray-battery {
  width: 24px;
  height: 18px;
  margin-left: 15px;
  margin-bottom: 6px;
}

.tray-wifi {
  width: 18px;
  height: 18px;
  margin-left: 16px;
}

.tray-sound {
  width: 22px;
  height: 18px;
  margin-left: 15px;
  margin-bottom: 4px;
}

.tray-clock {
  width: 108px;
  margin-left: 9px;
  display: flex;
  flex-direction: column;
  align-items: center;
  gap: 4px;
  font-size: 17.500px;
  line-height: 23px;
}

.tray-note {
  position: relative;
  width: 24px;
  height: 26px;
  margin-left: 22px;
  margin-top: -6px;
}

.tray-note svg {
  width: 24px;
  height: 26px;
}

.note-count {
  position: absolute;
  left: 11px;
  top: 14px;
  width: 25px;
  height: 25px;
  border-radius: 50%;
  border: 1px solid #8a8a8a;
  background: #c9cfcd;
  text-align: center;
  font-size: 15px;
  line-height: 23px;
}

.tray-peek {
  width: 1px;
  height: 100%;
  margin-left: 17px;
  background: #9ab0a7;
}
```
